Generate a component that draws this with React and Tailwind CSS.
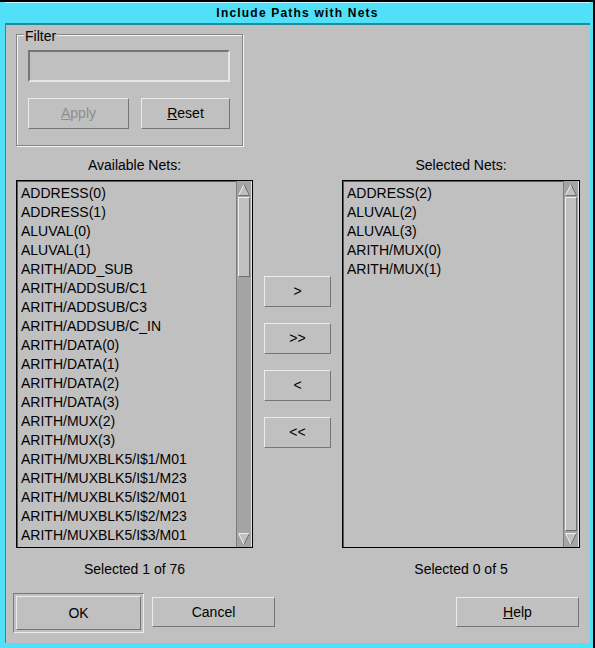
import React from "react";

const available = [
  "ADDRESS(0)",
  "ADDRESS(1)",
  "ALUVAL(0)",
  "ALUVAL(1)",
  "ARITH/ADD_SUB",
  "ARITH/ADDSUB/C1",
  "ARITH/ADDSUB/C3",
  "ARITH/ADDSUB/C_IN",
  "ARITH/DATA(0)",
  "ARITH/DATA(1)",
  "ARITH/DATA(2)",
  "ARITH/DATA(3)",
  "ARITH/MUX(2)",
  "ARITH/MUX(3)",
  "ARITH/MUXBLK5/I$1/M01",
  "ARITH/MUXBLK5/I$1/M23",
  "ARITH/MUXBLK5/I$2/M01",
  "ARITH/MUXBLK5/I$2/M23",
  "ARITH/MUXBLK5/I$3/M01",
];

const selected = [
  "ADDRESS(2)",
  "ALUVAL(2)",
  "ALUVAL(3)",
  "ARITH/MUX(0)",
  "ARITH/MUX(1)",
];

// raised motif style button
const Button = ({ children, className = "", disabled }) => (
  <div
    className={
      "flex items-center justify-center border border-t-[#ececec] border-l-[#ececec] border-b-[#767676] border-r-[#767676] text-[14px] " +
      (disabled ? "text-[#8e8e8e] " : "text-black ") +
      className
    }
  >
    {children}
  </div>
);

const Arrow = ({ down }) => (
  <div className="h-[15px] flex items-center justify-center">
    <svg width="12" height="12" viewBox="0 0 12 12">
      {down ? (
        <>
          <polygon points="0.5,0.5 11.5,0.5 6,11.5" fill="#c0c0c0" />
          <polyline points="0.5,0.5 11.5,0.5" stroke="#ececec" fill="none" />
          <polyline points="0.5,0.5 6,11.5" stroke="#ececec" fill="none" />
          <polyline points="11.5,0.5 6,11.5" stroke="#6e6e6e" fill="none" />
        </>
      ) : (
        <>
          <polygon points="6,0.5 11.5,11.5 0.5,11.5" fill="#c0c0c0" />
          <polyline points="6,0.5 0.5,11.5" stroke="#ececec" fill="none" />
          <polyline points="6,0.5 11.5,11.5 0.5,11.5" stroke="#6e6e6e" fill="none" />
        </>
      )}
    </svg>
  </div>
);

const ListBox = ({ items, thumb }) => (
  <div className="h-[368px] flex border border-black shadow-[inset_1px_1px_0_#5a5a5a]">
    <div className="flex-1 pl-[4px] pt-[3px] overflow-hidden">
      {items.map((it) => (
        <div key={it} className="h-[19px] leading-[19px] text-[14px] text-black whitespace-nowrap">
          {it}
        </div>
      ))}
    </div>
    {/* scrollbar */}
    <div className="w-[16px] flex flex-col bg-[#a4a4a4] border-l border-l-[#7c7c7c] border-r border-r-[#e4e4e4] px-[1px] py-[1px]">
      <Arrow />
      <div className="flex-1 flex flex-col">
        <div
          className={
            "bg-[#c0c0c0] border border-t-[#ececec] border-l-[#ececec] border-b-[#6e6e6e] border-r-[#6e6e6e] " +
            thumb
          }
        />
      </div>
      <Arrow down />
    </div>
  </div>
);

export default function App() {
  return (
    <div
      className="w-[595px] h-[648px] bg-[#50e1f9] border-t-2 border-t-black border-r-2 border-r-black flex flex-col pl-[5px] pr-[3px] pb-[5px]"
      style={{ fontFamily: '"Liberation Sans", Arial, sans-serif' }}
    >
      {/* title bar */}
      <div className="h-[23px] flex items-center justify-center border-t border-t-[#c8f6ff] border-b-2 border-b-[#1b8ea0]">
        <span className="text-[12px] font-bold tracking-[1.2px] text-black">Include Paths with Nets</span>
      </div>

      <div className="flex-1 bg-[#c0c0c0] flex flex-col border-l border-l-[#2a8ea0]">
        {/* filter group */}
        <div className="relative ml-[10px] mt-[9px] w-[227px] h-[112px] border border-[#858585] shadow-[inset_1px_1px_0_#f4f4f4,1px_1px_0_#f4f4f4] pl-[11px] pt-[15px]">
          <span className="absolute left-[7px] -top-[7px] bg-[#c0c0c0] px-[1px] text-[14px] text-black leading-[16px]">
            Filter
          </span>
          <div className="w-[202px] h-[32px] border-2 border-t-[#777] border-l-[#777] border-b-[#e6e6e6] border-r-[#e6e6e6]" />
          <div className="flex gap-[12px] mt-[16px]">
            <Button disabled className="w-[101px] h-[31px]">
              <span>
                <span className="underline">A</span>pply
              </span>
            </Button>
            <Button className="w-[89px] h-[31px]">
              <span>
                <span className="underline">R</span>eset
              </span>
            </Button>
          </div>
        </div>

        {/* list labels */}
        <div className="flex mt-[11px] h-[16px] text-[14px] leading-[16px] text-black">
          <div className="ml-[10px] w-[237px] text-center">Available Nets:</div>
          <div className="ml-[89px] w-[238px] text-center">Selected Nets:</div>
        </div>

        {/* lists */}
        <div className="flex mt-[7px]">
          <div className="ml-[10px] w-[237px]">
            <ListBox items={available} thumb="h-[80px]" />
          </div>
          <div className="ml-[11px] w-[67px] pt-[96px] flex flex-col gap-[16px]">
            <Button className="h-[31px] text-[12px]">&gt;</Button>
            <Button className="h-[31px] text-[12px]">&gt;&gt;</Button>
            <Button className="h-[31px] text-[12px]">&lt;</Button>
            <Button className="h-[31px] text-[12px]">&lt;&lt;</Button>
          </div>
          <div className="ml-[11px] w-[238px]">
            <ListBox items={selected} thumb="flex-1" />
          </div>
        </div>

        {/* counts */}
        <div className="flex mt-[13px] h-[16px] text-[14px] leading-[16px] text-black">
          <div className="ml-[10px] w-[237px] text-center">Selected 1 of 76</div>
          <div className="ml-[89px] w-[238px] text-center">Selected 0 of 5</div>
        </div>

        {/* bottom buttons */}
        <div className="flex items-start mt-[16px]">
          <div className="ml-[7px] w-[131px] h-[40px] border border-t-[#7a7a7a] border-l-[#7a7a7a] border-b-[#ececec] border-r-[#ececec] p-[2px]">
            <Button className="w-full h-full">OK</Button>
          </div>
          <Button className="ml-[8px] mt-[4px] w-[123px] h-[30px]">Cancel</Button>
          <Button className="ml-auto mr-[11px] mt-[4px] w-[123px] h-[30px]">
            <span>
              <span className="underline">H</span>elp
            </span>
          </Button>
        </div>
      </div>
    </div>
  );
}
